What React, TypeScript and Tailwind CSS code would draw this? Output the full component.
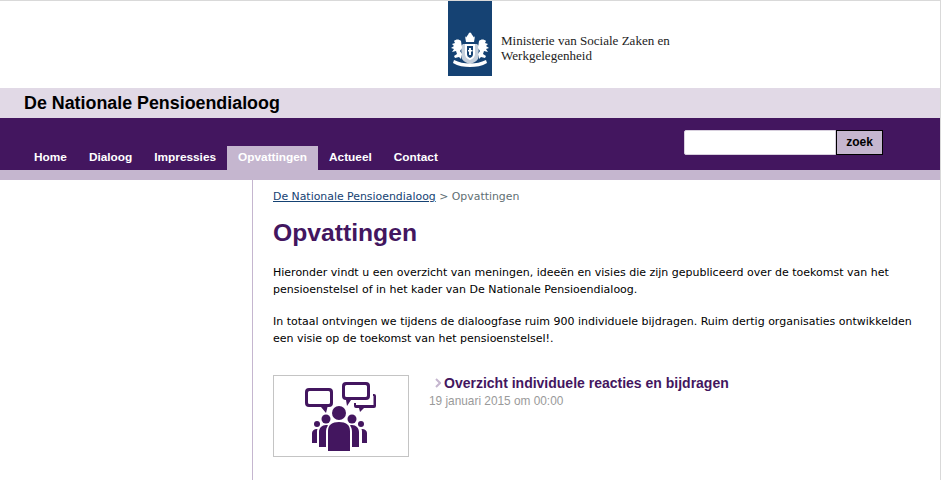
const navItems = [
  { label: "Home", active: false },
  { label: "Dialoog", active: false },
  { label: "Impressies", active: false },
  { label: "Opvattingen", active: true },
  { label: "Actueel", active: false },
  { label: "Contact", active: false },
];

const Crest = () => (
  <svg viewBox="0 0 44 40" className="w-[44px] h-[40px] mt-[29px]" fill="#fff">
    {/* crown */}
    <path d="M20.500 4a1.500 1.500 0 0 1 3 0l2.500 3.500L27 6l-1 6h-8l-1-6 1 1.500z" />
    {/* mantle */}
    <path d="M15 14h14l2 2-1 13c-2 3-5 4-8 5-3-1-6-2-8-5l-1-13z" opacity="0.75" />
    {/* shield */}
    <path d="M17 14h10v10c0 3-2 5-5 6-3-1-5-3-5-6z" />
    <path d="M19 16h6v8c0 2-1 3-3 4-2-1-3-2-3-4z" fill="#154273" />
    <path d="M21 18h2v2h1.500v1.500H23V25h-2v-3.500h-1V20h1z" />
    {/* left lion */}
    <path d="M13 11c-2-2-5-2-7 0l1 2-3 1 2 2-3 2 3 1-2 3 4-1 1 3-3 2 1 2 4-1 2 2 1-5-2-3 2-3z" />
    {/* right lion */}
    <path d="M31 11c2-2 5-2 7 0l-1 2 3 1-2 2 3 2-3 1 2 3-4-1-1 3 3 2-1 2-4-1-2 2-1-5 2-3-2-3z" />
    {/* ribbon */}
    <path d="M6 30c5 2.500 10 3.500 16 3.500S33 32.500 38 30l1 3c-5 3-11 4-17 4s-12-1-17-4z" />
  </svg>
);

const PeopleIcon = () => (
  <svg viewBox="0 0 134 80" className="w-[134px] h-[80px]" fill="#43165f">
    <path fillRule="evenodd" d="M35 12h20a4 4 0 0 1 4 4v11a4 4 0 0 1-4 4h-1.500L52 37l-5-6H35a4 4 0 0 1-4-4V16a4 4 0 0 1 4-4zm.500 3a1.500 1.500 0 0 0-1.500 1.500v10a1.500 1.500 0 0 0 1.500 1.500h19a1.500 1.500 0 0 0 1.500-1.500v-10a1.500 1.500 0 0 0-1.500-1.500z" />
    <path fillRule="evenodd" d="M72 6h20a4 4 0 0 1 4 4v10a4 4 0 0 1-4 4H77l-4 6-1-6a4 4 0 0 1-4-4V10a4 4 0 0 1 4-4zm.500 3a1.500 1.500 0 0 0-1.500 1.500v9a1.500 1.500 0 0 0 1.500 1.500h19a1.500 1.500 0 0 0 1.500-1.500v-9a1.500 1.500 0 0 0-1.500-1.500z" />
    <path d="M99 18h1a2 2 0 0 1 2 2v10a2 2 0 0 1-2 2H90l-4 4-1-4h-3a2 2 0 0 1-2-2v-3h2v2h17.500V20H99z" />
    <circle cx="65" cy="37" r="7" />
    <path d="M54 75V55c0-6 4-9 11-9s11 3 11 9v20z" />
    <circle cx="52" cy="43" r="4.500" />
    <path d="M45 71V56c0-4 3-7 7-7 1 0 1.500 0 2 .500-1.500 2-2 4-2 6.500v15z" />
    <circle cx="78" cy="43" r="4.500" />
    <path d="M85 71V56c0-4-3-7-7-7-1 0-1.500 0-2 .500 1.500 2 2 4 2 6.500v15z" />
    <circle cx="43" cy="48" r="3" />
    <path d="M38 67V57c0-2 2-4 5-4h.500c-.5 1-.5 2-.5 3v11z" />
    <circle cx="87" cy="48" r="3" />
    <path d="M93 67V57c0-2-2-4-5-4h-.500c.5 1 .5 2 .5 3v11z" />
  </svg>
);

export default function App() {
  return (
    <div className="w-[941px] h-[480px] overflow-hidden bg-white border-t border-r border-[#d9d9d9] font-['Liberation_Sans',sans-serif]">
      <header className="h-[87px] flex pl-[448px]">
        <div className="w-[44px] h-[75px] bg-[#154273]">
          <Crest />
        </div>
        <p className="ml-[9px] mt-[32px] text-[13.05px] leading-[15px] text-[#222] font-['Liberation_Serif',serif]">
          Ministerie van Sociale Zaken en
          <br />
          Werkgelegenheid
        </p>
      </header>

      <div className="h-[30px] bg-[#e1d9e6] pl-[24px] pt-[5px] text-[17.85px] leading-[21px] font-bold text-black">
        De Nationale Pensioendialoog
      </div>

      <div className="h-[52px] bg-[#43165f] flex justify-between">
        <nav className="flex items-end pl-[23px]">
          {navItems.map((item) => (
            <a
              key={item.label}
              href="#"
              className={
                item.active
                  ? "h-[24px] px-[11px] text-[11.84px] leading-[23px] font-bold text-white bg-[#c5b6cf]"
                  : "h-[24px] px-[11px] text-[11.84px] leading-[23px] font-bold text-white"
              }
            >
              {item.label}
            </a>
          ))}
        </nav>
        <form className="flex mt-[12px] mr-[57px] h-[26px]">
          <input className="w-[152px] h-[25px] bg-white border border-[#d8d0de] rounded-l-[2px]" />
          <button
            type="button"
            className="w-[47px] h-[25px] pb-[2px] bg-[#c5b6cf] border border-black text-[12px] font-bold text-black"
          >
            zoek
          </button>
        </form>
      </div>

      <div className="h-[10px] bg-[#c5b6cf]" />

      <div className="flex">
        <aside className="w-[253px] h-[300px] border-r border-[#c5b6cf] shrink-0" />
        <main className="pl-[20px] pr-[24px] font-['DejaVu_Sans',sans-serif] text-[11px] leading-[16.500px] text-black">
          <p className="mt-[8px] text-[10.9px] leading-[17px] text-[#5f6f73]">
            <a href="#" className="text-[#154273] underline">
              De Nationale Pensioendialoog
            </a>{" "}
            &gt; Opvattingen
          </p>
          <h1 className="mt-[13px] text-[24.7px] leading-[30px] font-bold text-[#43165f] font-['Liberation_Sans',sans-serif]">
            Opvattingen
          </h1>
          <p className="mt-[17px]">
            Hieronder vindt u een overzicht van meningen, ideeën en visies die zijn gepubliceerd over de toekomst van het
            <br />
            pensioenstelsel of in het kader van De Nationale Pensioendialoog.
          </p>
          <p className="mt-[16px]">
            In totaal ontvingen we tijdens de dialoogfase ruim 900 individuele bijdragen. Ruim dertig organisaties ontwikkelden
            <br />
            een visie op de toekomst van het pensioenstelsel!.
          </p>
          <div className="flex mt-[28px]">
            <div className="w-[136px] h-[82px] border border-[#c4c4c4] flex items-center justify-center shrink-0">
              <PeopleIcon />
            </div>
            <div className="ml-[20px] font-['Liberation_Sans',sans-serif]">
              <h2 className="flex items-center ml-[6px] text-[14px] leading-[16px] font-bold text-[#43165f]">
                <svg viewBox="0 0 6 10" className="w-[6px] h-[10px] mr-[3px]" fill="none" stroke="#c5b6cf" strokeWidth="2">
                  <path d="M1 1l4 4-4 4" />
                </svg>
                Overzicht individuele reacties en bijdragen
              </h2>
              <p className="text-[11.85px] leading-[15px] mt-[3px] text-[#9a9a9a]">19 januari 2015 om 00:00</p>
            </div>
          </div>
        </main>
      </div>
    </div>
  );
}
